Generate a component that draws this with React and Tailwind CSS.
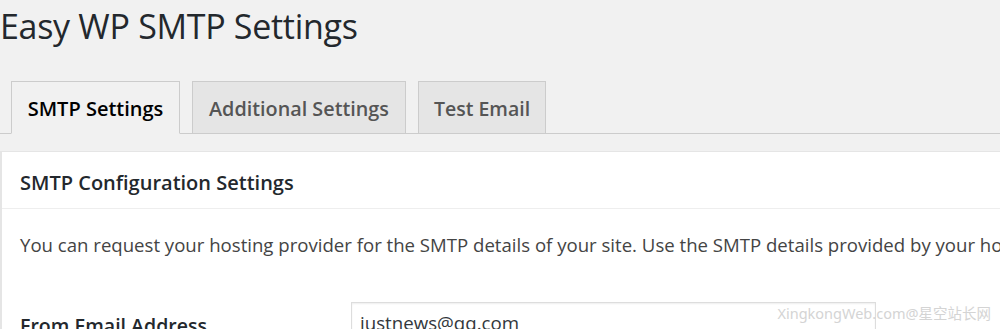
export default function App() {
  return (
    <div
      className="relative w-[1000px] h-[329px] overflow-hidden bg-[#f1f1f1] text-[#23282d]"
      style={{ fontFamily: '"Open Sans", "Noto Sans", sans-serif' }}
    >
      {/* Page title */}
      <h1 className="pt-[2px] text-[34px] leading-[48px] font-normal tracking-[-0.3px] whitespace-nowrap">
        Easy WP SMTP Settings
      </h1>

      {/* Tabs */}
      <div className="mt-[31px] flex items-end gap-[12px] pl-[11px] border-b border-[#ccc]">
        <div className="-mb-px h-[53px] w-[169px] flex items-center justify-center pt-[2px] border border-[#ccc] border-b-[#f1f1f1] bg-[#f1f1f1] text-[20px] font-semibold text-black">
          SMTP Settings
        </div>
        <div className="-mb-px h-[53px] w-[214px] flex items-center justify-center pt-[2px] border border-[#ccc] bg-[#e5e5e5] text-[19.8px] font-semibold text-[#555]">
          Additional Settings
        </div>
        <div className="-mb-px h-[53px] w-[128px] flex items-center justify-center pt-[2px] border border-[#ccc] bg-[#e5e5e5] text-[19.5px] font-semibold text-[#555]">
          Test Email
        </div>
      </div>

      {/* Settings panel */}
      <div className="mt-[17px] bg-white border-l-2 border-t border-[#e5e5e5]">
        <div className="h-[57px] flex items-center pt-[5px] pl-[18px] border-b border-[#eee] text-[20px] font-semibold whitespace-nowrap">
          SMTP Configuration Settings
        </div>
        <p className="pt-[22px] pl-[18px] text-[18.6px] leading-[28px] text-[#444] whitespace-nowrap">
          You can request your hosting provider for the SMTP details of your site. Use the SMTP details provided by your hosting provider to configure the following settings.
        </p>
        <div className="mt-[43px] flex">
          <div className="w-[349px] pl-[18px] pt-[9px] text-[19.5px] font-semibold whitespace-nowrap">
            From Email Address
          </div>
          <div className="h-[40px] w-[525px] border border-[#ddd] shadow-[inset_0_1px_2px_rgba(0,0,0,0.07)] pl-[8px] pt-[6px] text-[18.7px] text-[#32373c]">
            justnews@qq.com
          </div>
        </div>
      </div>

      {/* Watermark */}
      <div
        className="absolute right-[9px] top-[303px] text-[14.5px] text-[#d4d4d4] whitespace-nowrap"
        style={{ fontFamily: '"Noto Sans", "Noto Sans CJK SC", sans-serif' }}
      >
        XingkongWeb.com@星空站长网
      </div>
    </div>
  )
}
